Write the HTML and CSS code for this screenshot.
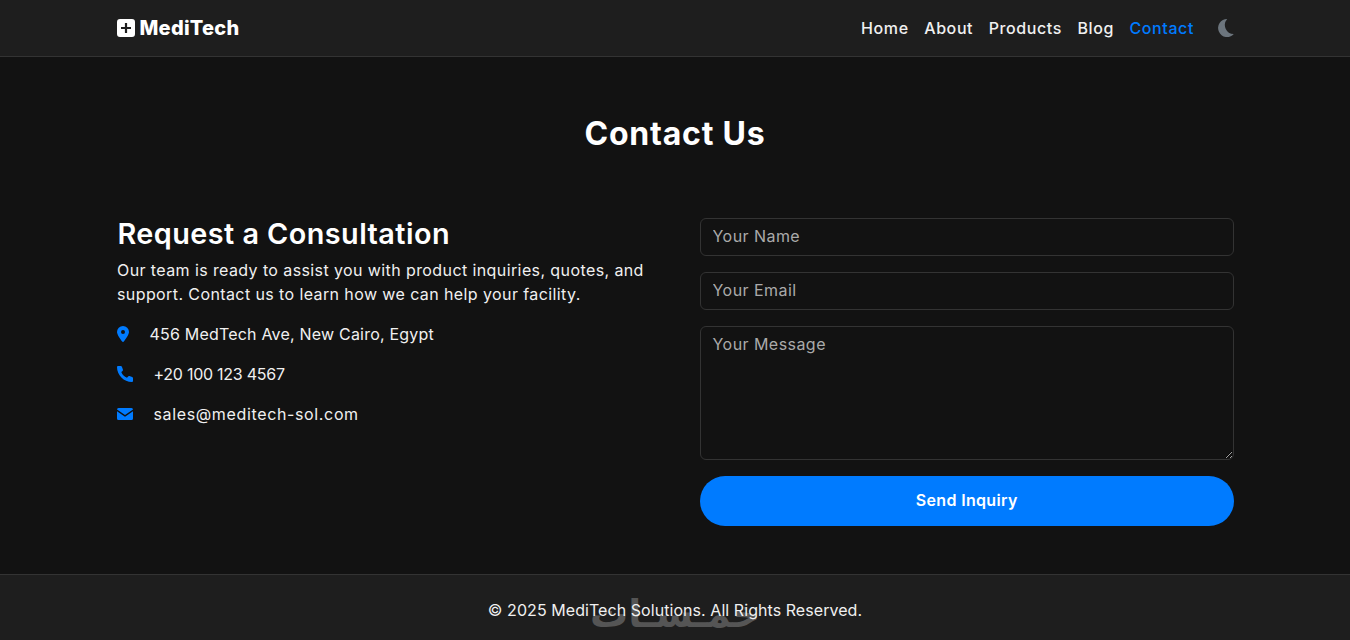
FILE: index.html
```html
<!DOCTYPE html>
<html lang="en">
<head>
    <meta charset="UTF-8">
    <meta name="viewport" content="width=device-width, initial-scale=1.0">
    <title>MediTech - Contact</title>
    <link rel="stylesheet" href="styles.css">
</head>
<body>
    <header class="site-header">
        <div class="container header-row">
            <a class="logo" href="#">
                <svg class="logo-icon" viewBox="0 0 18 18"><path fill-rule="evenodd" d="M3 0h12a3 3 0 0 1 3 3v12a3 3 0 0 1-3 3H3a3 3 0 0 1-3-3V3a3 3 0 0 1 3-3zm4.900 4v3.900H4v2.200h3.900V14h2.200v-3.900H14V7.900h-3.900V4z"/></svg>
                <span>MediTech</span>
            </a>
            <nav class="nav">
                <a href="#">Home</a>
                <a href="#">About</a>
                <a href="#">Products</a>
                <a href="#">Blog</a>
                <a href="#" class="active">Contact</a>
                <svg class="moon" viewBox="0 0 16 18"><path d="M9.200 0A9 9 0 1 0 15.800 15 9 9 0 0 1 9.200 0z"/></svg>
            </nav>
        </div>
    </header>

    <main class="container">
        <h1 class="page-title">Contact Us</h1>
        <div class="contact-grid">
            <section class="info">
                <h2>Request a Consultation</h2>
                <p>Our team is ready to assist you with product inquiries, quotes, and support. Contact us to learn how we can help your facility.</p>
                <ul class="details">
                    <li>
                        <svg class="pin" viewBox="0 0 12 16"><path fill-rule="evenodd" d="M6 0a6 6 0 0 1 6 6c0 2.700-3.600 7.500-5.200 9.500a1 1 0 0 1-1.600 0C3.600 13.500 0 8.700 0 6a6 6 0 0 1 6-6zm0 4a2 2 0 1 0 0 4 2 2 0 0 0 0-4z"/></svg>
                        <span class="address">456 MedTech Ave, New Cairo, Egypt</span>
                    </li>
                    <li>
                        <svg class="phone" viewBox="0 0 16 16"><path d="M4.900.8 5.900 3.600a1.200 1.200 0 0 1-.3 1.300L4.300 6a10 10 0 0 0 5.700 5.700l1.100-1.300a1.200 1.200 0 0 1 1.300-.3l2.800 1a1.200 1.200 0 0 1 .8 1.100V15a1 1 0 0 1-1 1C6.800 16 0 9.200 0 1a1 1 0 0 1 1-1h2.800a1.200 1.200 0 0 1 1.100.8z"/></svg>
                        <span class="tel">+20 100 123 4567</span>
                    </li>
                    <li>
                        <svg class="mail" viewBox="0 0 16 12"><path d="M1.500 0h13A1.500 1.500 0 0 1 16 1.500L8 7 0 1.500A1.500 1.500 0 0 1 1.500 0zM0 3.300l8 5.400 8-5.400v7.200a1.500 1.500 0 0 1-1.500 1.500h-13A1.500 1.500 0 0 1 0 10.500z"/></svg>
                        <span class="email">sales@meditech-sol.com</span>
                    </li>
                </ul>
            </section>
            <form class="contact-form">
                <input type="text" placeholder="Your Name">
                <input type="email" placeholder="Your Email">
                <textarea placeholder="Your Message"></textarea>
                <button type="button">Send Inquiry</button>
            </form>
        </div>
    </main>

    <footer class="site-footer">
        <p>&copy; 2025 MediTech Solutions. All Rights Reserved.</p>
        <span class="watermark" lang="ar" dir="rtl">خمـسـات</span>
    </footer>
</body>
</html>
```

FILE: styles.css
```css
* {
    margin: 0;
    padding: 0;
    box-sizing: border-box;
}

body {
    font-family: 'Inter', 'Noto Sans', sans-serif;
    background: #121212;
    color: #f0f0f0;
    font-size: 16px;
}

.container {
    width: 1117px;
    margin: 0 auto;
}

.site-header {
    background: #1e1e1e;
    border-bottom: 1px solid #333;
    height: 57px;
}

.header-row {
    height: 56px;
    display: flex;
    justify-content: space-between;
    align-items: center;
}

.logo {
    display: flex;
    align-items: center;
    gap: 5px;
    color: #fff;
    font-size: 20px;
    font-weight: 800;
    letter-spacing: 0.25px;
    text-decoration: none;
}

.logo-icon {
    width: 18px;
    height: 18px;
    fill: #fff;
}

.nav {
    display: flex;
    align-items: center;
    gap: 15.500px;
}

.nav a {
    color: #f0f0f0;
    font-weight: 500;
    letter-spacing: 0.6px;
    text-decoration: none;
}

.nav a.active {
    color: #007bff;
}

.moon {
    width: 16px;
    height: 18px;
    fill: #6c757d;
    margin-left: 8px;
}

.page-title {
    text-align: center;
    color: #fff;
    font-size: 32px;
    font-weight: 700;
    line-height: 48px;
    letter-spacing: 0.8px;
    margin-top: 53px;
    margin-bottom: 60px;
}

.contact-grid {
    display: grid;
    grid-template-columns: 1fr 1fr;
    gap: 50px;
    padding-bottom: 48px;
}

.info h2 {
    color: #fff;
    font-size: 28.800px;
    font-weight: 600;
    line-height: 32px;
    letter-spacing: 0.45px;
    padding-left: 1px;
    margin-bottom: 8px;
}

.info p {
    line-height: 24px;
    letter-spacing: 0.4px;
    padding-left: 0.500px;
    margin-bottom: 16px;
}

.details {
    list-style: none;
}

.details li {
    display: flex;
    align-items: center;
    gap: 21px;
    height: 24px;
    margin-bottom: 16px;
}

.address {
    letter-spacing: 0.2px;
}

.tel {
    letter-spacing: -0.25px;
}

.email {
    letter-spacing: 0.64px;
}

.details svg {
    fill: #007bff;
    flex-shrink: 0;
}

.pin {
    width: 12px;
    height: 16px;
}

.phone {
    width: 16px;
    height: 16px;
}

.mail {
    width: 16px;
    height: 12px;
}

.contact-form {
    display: flex;
    flex-direction: column;
    gap: 16px;
}

.contact-form input,
.contact-form textarea {
    width: 100%;
    height: 38px;
    padding: 5px 12px 7px 11.500px;
    background: #121212;
    border: 1px solid #333;
    border-radius: 6px;
    color: #f0f0f0;
    font-family: inherit;
    font-size: 16px;
    line-height: 24px;
    letter-spacing: 0.45px;
}

.contact-form textarea {
    height: 134px;
}

.contact-form ::placeholder {
    color: #aaa;
    opacity: 1;
}

.contact-form button {
    height: 50px;
    padding-bottom: 2px;
    background: #007bff;
    border: none;
    border-radius: 25px;
    color: #fff;
    font-family: inherit;
    font-size: 16px;
    font-weight: 600;
    letter-spacing: 0.33px;
}

.site-footer {
    position: relative;
    background: #1e1e1e;
    border-top: 1px solid #333;
    height: 66px;
    padding-top: 4px;
    display: flex;
    align-items: center;
    justify-content: center;
}

.watermark {
    position: absolute;
    left: 575px;
    top: 14px;
    width: 200px;
    text-align: center;
    color: #555;
    font-family: 'DejaVu Sans', sans-serif;
    font-size: 38px;
    line-height: 50px;
    font-weight: 700;
}

.site-footer p {
    position: relative;
    z-index: 1;
    color: #f0f0f0;
    letter-spacing: 0.06px;
}
```
